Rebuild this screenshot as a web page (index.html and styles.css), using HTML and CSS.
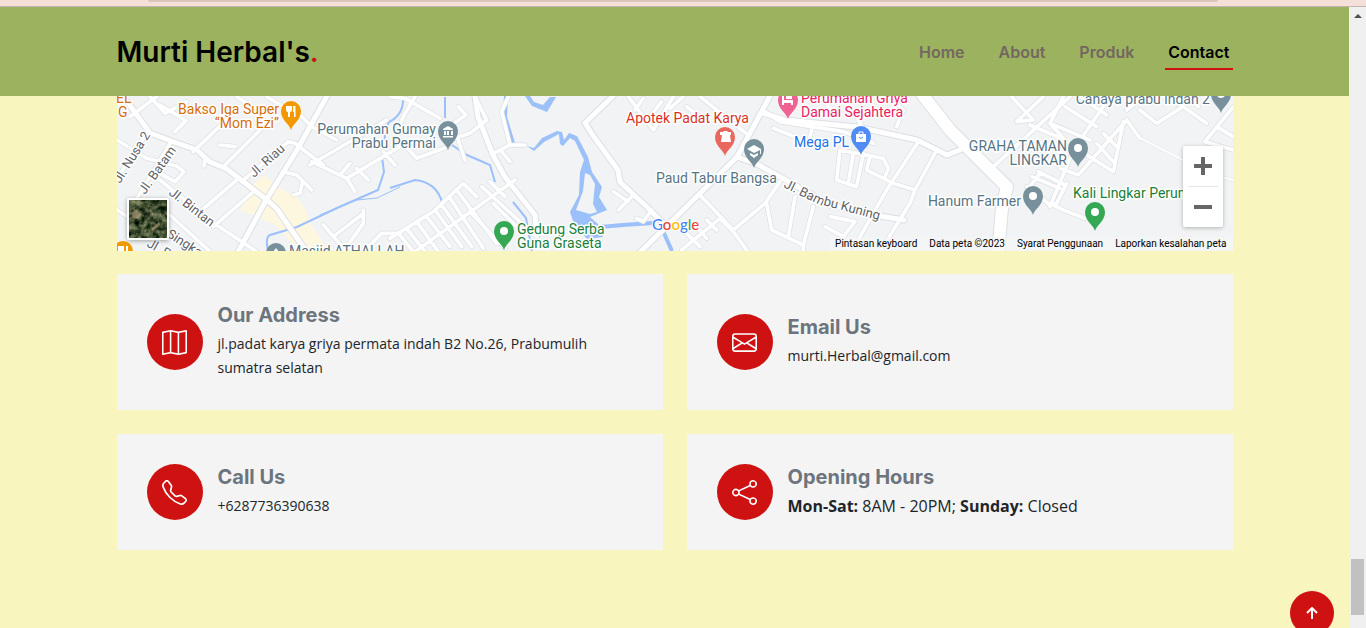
FILE: index.html
```html
<!DOCTYPE html>
<html lang="id">
<head>
<meta charset="utf-8">
<meta name="viewport" content="width=device-width, initial-scale=1">
<title>Murti Herbal's</title>
<link rel="stylesheet" href="styles.css">
</head>
<body>
<div class="browser-edge"><div class="address-edge"></div></div>
<div class="viewport">
  <div class="page">
    <header class="header">
      <div class="container header-row">
        <a class="logo" href="#">Murti Herbal's<span class="logo-dot">.</span></a>
        <nav class="nav">
          <a href="#">Home</a>
          <a href="#">About</a>
          <a href="#">Produk</a>
          <a href="#" class="active">Contact</a>
        </nav>
      </div>
    </header>
    <main class="container">
      <section class="map" aria-label="Map">
        <svg class="map-canvas" viewBox="117 96 1116 155" preserveAspectRatio="xMidYMid slice">
          <defs>
            <path id="pin" d="M0 0C-1.5-6-10-10-10-19A10 10 0 0 1 10-19C10-10 1.500-6 0 0Z"/>
            <filter id="terrain" x="0" y="0" width="1" height="1" color-interpolation-filters="sRGB">
              <feTurbulence type="fractalNoise" baseFrequency=".16" numOctaves="4" seed="8"/>
              <feColorMatrix values=".9 .3 0 0 -.34  .8 .3 0 0 -.24  .7 .2 0 0 -.25  0 0 0 0 1"/>
            </filter>
            <g id="minor">
              <g transform="translate(110 90) scale(.33333)">
                <path d="M60 80L140 20M120 20L165 70L230 35M150 45L228 92L195 125M22 150L110 205M110 130L22 265M180 160L75 335M110 205L200 228L222 245L195 275L150 250M130 255L320 405L440 485M22 360L60 385L180 375L300 485M395 275L535 155L555 160L600 195L640 225M270 365L380 270M310 410L425 310M250 185L380 60M345 225L495 75M285 205L282 228M330 165L375 170M555 60L605 110L680 150M600 225L830 90M605 215L710 265L735 305M710 265L870 170M740 235L775 270M690 255L720 220M820 185L855 225M520 245L560 255L605 300M578 275L570 310L550 315M640 405L710 485M670 440L760 370M700 485L760 400V360M760 485L815 430H870M380 20L480 85M470 20L570 80"/>
              </g>
              <g transform="translate(390 90) scale(.33333)">
                <path d="M255 20L290 90L240 130L195 145M355 20L335 65L360 165L310 190M360 165H405M335 185L360 215M75 20L40 80L20 130M0 20L45 25L150 85M205 50L228 75L185 105M175 170L80 205L35 155M205 150L225 210M0 445L130 365L220 280L260 320M75 485L375 270M25 430L70 485M50 415L105 485M80 395L145 485M110 380L180 470M135 360L215 470M155 345L245 470M180 325L280 475M200 300L320 460M240 365L345 475M275 290L440 440M300 275L345 320M310 340L400 430M670 305L715 335M730 315L685 360M715 20L790 120L850 20M735 60L760 25M780 80L815 35M740 385L760 395L785 360"/>
              </g>
              <g transform="translate(670 90) scale(.33333)">
                <path d="M0 55L40 20M90 20L235 135M50 50L90 80M310 115L400 150L470 170M285 65L330 95L520 125L610 160M430 100L420 140M510 180L500 270L560 290L580 190M510 180L640 205L655 235L645 260M550 190L535 280M600 200L590 240L670 280L735 300M560 80L575 110M745 155L650 300L570 440L555 485M800 180L735 300L720 340L630 485M90 315L190 420L285 340L330 275M290 340L305 420L400 465L430 350M375 320L355 440M400 465V485M35 480L150 385L190 425L230 480M50 430L90 470M80 410L110 445M110 390L140 420M480 380L555 395L520 440L465 410M680 110L700 60L660 20M450 20L500 75"/>
              </g>
              <g transform="translate(950 90) scale(.33333)">
                <path d="M130 230L360 20M185 20L250 90L200 95L280 20M240 105L345 150L300 100L420 150M345 50L440 110M340 20L300 100M390 20L470 75M480 20L370 180L300 350M330 235L385 255L530 90L570 145M520 95L490 245L410 195M440 160L490 215M460 130L500 170M245 260L330 295M265 245L345 285M230 290L300 345L320 340L350 280M270 250L235 295M300 340L340 360L405 385M570 60L620 100L700 50L770 100M640 20L700 50M710 20L745 50M850 50L765 155L850 180M800 110L850 140M530 60L580 20"/>
              </g>
            </g>
            <g id="major">
              <path d="M123 96L142 122L150 133L174 142L197 150L210 162L227 169L267 200L277 209L308 254M327 96L297 150L265 202L237 254M475 96L478 117L493 155L505 177L535 215L537 235M613 96L585 123L594 137L618 170L620 182L647 207L664 224M770 96L750 133L737 157L620 272M737 157L757 164L784 179L830 205L874 215L904 220M763 113L785 120L857 127L917 140L947 155L960 150"/>
            </g>
            <path id="highway" d="M922 94L950 130L977 157L1007 187L1002 208L998 255"/>
            <g id="lane"><path d="M1140 138L1183 160M1183 167L1233 180"/></g>
          </defs>
          <rect class="land" x="0" y="0" width="1366" height="400"/>
          <path class="district" d="M253 184L265 175L277 187L297 197L306 210L310 223L329 251H300L274 224L240 210Z"/>
          <g class="water">
            <path d="M525 96L532 106L547 112L556 97H550L543 105L534 102L530 96Z"/>
            <path d="M527 146L534 148L542 138L557 131L562 132L564 140L569 133L577 136L588 157L592 172L602 187L599 197L607 210L590 217L598 224L603 237L587 239L574 224L570 212L579 195L580 172L584 160L575 141L570 138L563 146L560 144L559 134L544 142L534 151ZM585 173L583 191L576 210L590 214L597 212L593 204L595 184L590 175Z" fill-rule="evenodd"/>
            <path class="stream wide" d="M506 96L505 117L513 143M600 227L623 225L653 223M663 231L672 251"/>
            <path class="stream" d="M403 97C404 112 395 119 389 122C384 130 386 137 384 140M382 157L384 172L378 190L337 208L297 227L270 235Q265 237 268 251M445 97V118M452 145L467 155L490 165L495 182M390 188L415 180Q436 182 442 202M513 202L526 218L532 251"/>
            <path class="stream thin" d="M400 187L377 198L357 200L320 215"/>
          </g>
          <use href="#minor" class="edge minor-edge"/><use href="#major" class="edge major-edge"/><use href="#highway" class="edge highway-edge"/><use href="#lane" class="edge lane-edge"/>
          <use href="#minor" class="road minor-road"/><use href="#major" class="road major-road"/><use href="#highway" class="road highway-road"/><use href="#lane" class="road lane-road"/>
          <g class="street">
            <text transform="translate(120 184) rotate(-58)">Jl. Nusa 2</text>
            <text transform="translate(145 195) rotate(-55)">Jl. Batam</text>
            <text transform="translate(254 178) rotate(-42)">Jl. Riau</text>
            <text transform="translate(168 194) rotate(38)">Jl. Bintan</text>
            <text transform="translate(146 246) rotate(30)">Jl. P</text>
            <text transform="translate(166 236) rotate(33)">Singkarak</text>
            <text transform="translate(783 187) rotate(26)">Jl. Bam</text>
            <text transform="translate(823 205) rotate(15)">bu Kuning</text>
          </g>
          <g class="place">
            <g class="food"><text x="116" y="103">EL</text><text x="118" y="117">G</text><text x="279" y="114" text-anchor="end">Bakso Iga Super</text><text x="279" y="128" text-anchor="end">“Mom Ezi”</text></g>
            <g class="civic"><text x="436" y="134" text-anchor="end">Perumahan Gumay</text><text x="436" y="148" text-anchor="end">Prabu Permai</text><text x="289" y="256">Masjid ATHALLAH</text><text x="656" y="183">Paud Tabur Bangsa</text><text x="1067" y="151" text-anchor="end">GRAHA TAMAN</text><text x="1067" y="165" text-anchor="end">LINGKAR</text><text x="1021" y="206" text-anchor="end">Hanum Farmer</text><text x="1210" y="104" text-anchor="end">Cahaya prabu indah 2</text></g>
            <g class="park"><text x="517" y="234">Gedung Serba</text><text x="517" y="248">Guna Graseta</text><text x="1073" y="198">Kali Lingkar Perumnas</text></g>
            <text class="health" x="626" y="123">Apotek Padat Karya</text>
            <g class="lodging"><text x="801" y="103">Perumahan Griya</text><text x="801" y="117">Damai Sejahtera</text></g>
            <text class="shop" x="849" y="147" text-anchor="end">Mega PL</text>
          </g>
          <g class="pin-orange"><use href="#pin" x="291" y="130"/><use href="#pin" x="123" y="270"/></g>
          <g class="pin-grey"><use href="#pin" x="448" y="150"/><use href="#pin" x="754" y="168"/><use href="#pin" x="1078" y="167"/><use href="#pin" x="1033" y="215"/><use href="#pin" x="1221" y="113"/><use href="#pin" x="276" y="272"/></g>
          <g class="pin-green"><use href="#pin" x="504" y="250"/><use href="#pin" x="1095" y="231"/></g>
          <use href="#pin" x="725" y="156" class="pin-red"/><use href="#pin" x="788" y="119" class="pin-pink"/><use href="#pin" x="861" y="155" class="pin-blue"/>
          <g fill="#fff">
            <circle cx="1078" cy="148" r="4"/><circle cx="1033" cy="196" r="4"/><circle cx="1221" cy="94" r="4"/><circle cx="504" cy="231" r="4"/><circle cx="1095" cy="212" r="4"/>
            <path d="M286 106h6v4q0 2-2 2v5h-2v-5q-2 0-2-2ZM293 106h2.500v11H294v-5h-1ZM118 246h6v4q0 2-2 2h-4ZM126 246h2v6h-2Z"/>
            <path d="M448 126l5 3v1h-10v-1ZM444 131h2v4h-2ZM447 131h2v4h-2ZM451 131h2v4h-2ZM443 136h10v1.500h-10Z"/>
            <path d="M720 132h3l1-1h3l1 1h3v3h-1l1 7h-10l1-7h-2Z"/>
            <path d="M747 149l7-4 7 4v5h-1v-4l-6 3ZM750 153l4 2 4-2v2l-4 3-4-3Z"/>
            <path d="M276 248l3 4h-6Z"/>
            <path d="M782 96h2v4h9v5h-2v-2h-7v2h-2ZM786 96h6v3h-6Z"/>
            <path d="M856 134h10v8h-10Z"/><path d="M859 134v-2h4v2" fill="none" stroke="#fff"/>
          </g>
          <path d="M859 137q2 3 4 0" fill="none" stroke="#4f8df5"/>
          <text class="google" x="652" y="230"><tspan fill="#4285f4">G</tspan><tspan fill="#ea4335">o</tspan><tspan fill="#fbbc05">o</tspan><tspan fill="#4285f4">g</tspan><tspan fill="#34a853">l</tspan><tspan fill="#ea4335">e</tspan></text>
        </svg>
        <button class="satellite" aria-label="Citra satelit"><svg viewBox="0 0 38 38"><rect width="38" height="38" filter="url(#terrain)"/><path d="M3 13l4-4 5 5-3 5-5-1ZM22 29l8-7 1 3-7 6Z" fill="#ad9978" opacity=".65"/></svg></button>
        <div class="zoom">
          <button aria-label="Perbesar"><svg viewBox="0 0 18 18"><path d="M7 0h4v7h7v4h-7v7H7v-7H0V7h7Z"/></svg></button>
          <button aria-label="Perkecil"><svg viewBox="0 0 18 18"><path d="M0 7h18v4H0Z"/></svg></button>
        </div>
        <div class="map-links"><button>Pintasan keyboard</button><span>Data peta ©2023</span><a href="#">Syarat Penggunaan</a><a href="#">Laporkan kesalahan peta</a></div>
      </section>
      <section class="cards">
        <article class="card">
          <span class="icon"><svg viewBox="0 0 16 16"><path fill-rule="evenodd" d="M15.817.113A.5.5 0 0 1 16 .5v14a.5.5 0 0 1-.402.49l-5 1a.502.502 0 0 1-.196 0L5.500 15.010l-4.902.98A.5.5 0 0 1 0 15.500v-14a.5.5 0 0 1 .402-.49l5-1a.5.5 0 0 1 .196 0L10.500.99l4.902-.98a.5.5 0 0 1 .415.103zM10 1.910l-4-.8v12.980l4 .8V1.910zm1 12.980 4-.8V1.110l-4 .8v12.980zm-6-.8V1.110l-4 .8v12.980l4-.8z"/></svg></span>
          <div><h3>Our Address</h3><p>jl.padat karya griya permata indah B2 No.26, Prabumulih sumatra selatan</p></div>
        </article>
        <article class="card">
          <span class="icon"><svg viewBox="0 0 16 16"><path d="M0 4a2 2 0 0 1 2-2h12a2 2 0 0 1 2 2v8a2 2 0 0 1-2 2H2a2 2 0 0 1-2-2V4Zm2-1a1 1 0 0 0-1 1v.217l7 4.200 7-4.200V4a1 1 0 0 0-1-1H2Zm13 2.383-4.708 2.825L15 11.105V5.383Zm-.034 6.876-5.640-3.471L8 9.583l-1.326-.795-5.640 3.470A1 1 0 0 0 2 13h12a1 1 0 0 0 .966-.741ZM1 11.105l4.708-2.897L1 5.383v5.722Z"/></svg></span>
          <div><h3>Email Us</h3><p>murti.Herbal@gmail.com</p></div>
        </article>
        <article class="card">
          <span class="icon"><svg viewBox="0 0 16 16"><path d="M3.654 1.328a.678.678 0 0 0-1.015-.063L1.605 2.300c-.483.484-.661 1.169-.450 1.770a17.568 17.568 0 0 0 4.168 6.608 17.569 17.569 0 0 0 6.608 4.168c.601.211 1.286.033 1.770-.450l1.034-1.034a.678.678 0 0 0-.063-1.015l-2.307-1.794a.678.678 0 0 0-.580-.122l-2.190.547a1.745 1.745 0 0 1-1.657-.459L5.482 8.062a1.745 1.745 0 0 1-.460-1.657l.548-2.190a.678.678 0 0 0-.122-.580L3.654 1.328zM1.884.511a1.745 1.745 0 0 1 2.612.163L6.290 2.980c.329.423.445.974.315 1.494l-.547 2.190a.678.678 0 0 0 .178.643l2.457 2.457a.678.678 0 0 0 .644.178l2.189-.547a1.745 1.745 0 0 1 1.494.315l2.306 1.794c.829.645.905 1.870.163 2.611l-1.034 1.034c-.740.740-1.846 1.065-2.877.702a18.634 18.634 0 0 1-7.010-4.420 18.634 18.634 0 0 1-4.420-7.009c-.362-1.030-.037-2.137.703-2.877L1.885.511z"/></svg></span>
          <div><h3>Call Us</h3><p>+6287736390638</p></div>
        </article>
        <article class="card">
          <span class="icon"><svg viewBox="0 0 16 16"><path d="M13.500 1a1.500 1.500 0 1 0 0 3 1.500 1.500 0 0 0 0-3zM11 2.500a2.500 2.500 0 1 1 .603 1.628l-6.718 3.120a2.499 2.499 0 0 1 0 1.504l6.718 3.120a2.500 2.500 0 1 1-.488.876l-6.718-3.120a2.500 2.500 0 1 1 0-3.256l6.718-3.120A2.500 2.500 0 0 1 11 2.500zm-8.500 4a1.500 1.500 0 1 0 0 3 1.500 1.500 0 0 0 0-3zm11 5.500a1.500 1.500 0 1 0 0 3 1.500 1.500 0 0 0 0-3z"/></svg></span>
          <div><h3>Opening Hours</h3><p class="hours"><strong>Mon-Sat:</strong> 8AM - 20PM; <strong>Sunday:</strong> Closed</p></div>
        </article>
      </section>
    </main>
    <a class="to-top" href="#" aria-label="Back to top"><svg viewBox="0 0 12 12"><path d="M6 12V1M1 6l5-5 5 5"/></svg></a>
  </div>
  <div class="scrollbar"><svg class="scroll-arrow" viewBox="0 0 8 4"><path d="M4 0l4 4H0Z"/></svg><div class="thumb"></div></div>
</div>
</body>
</html>
```
FILE: styles.css
```css
* { box-sizing: border-box; }
body { margin: 0; height: 100vh; overflow: hidden; display: flex; flex-direction: column; font: 16px/24px "Open Sans", sans-serif; color: #212529; background: #f9f5bf; }
h3, p { margin: 0; }
a { color: inherit; text-decoration: none; }
button { border: 0; padding: 0; font: inherit; color: inherit; background: none; cursor: pointer; }
svg { display: block; }

.browser-edge { height: 7px; flex: none; background: #f5e0d9; border-bottom: 1px solid #c4b3ae; }
.address-edge { height: 2px; margin: 0 148px; background: #d9c6bf; border-radius: 0 0 4px 4px; }
.viewport { flex: 1; min-height: 0; display: flex; }
.page { flex: 1; min-width: 0; position: relative; overflow: hidden; }
.container { width: 100%; max-width: 1140px; margin: 0 auto; padding: 0 12px; }

.header { background: #9bb35f; }
.header-row { min-height: 89px; display: flex; align-items: center; justify-content: space-between; font-family: Inter, sans-serif; font-weight: 600; }
.logo { font-size: 28px; line-height: 34px; color: #000; }
.logo-dot { color: #ce1212; }
.nav { display: flex; gap: 28px; color: #746761; }
.nav a { padding: 6px 3px 4px; border-bottom: 2px solid transparent; }
.nav .active { color: #000; border-color: #ce1212; }

.map { position: relative; overflow: hidden; margin-bottom: 23px; }
.map-canvas { width: 100%; height: 155px; }
.land { fill: #f1f3f4; }
.district { fill: #fef7e0; }
.water { fill: #9cc0fa; }
.stream { fill: none; stroke: #9cc0fa; stroke-width: 2; }
.stream.wide { stroke-width: 4; }
.stream.thin { stroke-width: 1; }
.edge, .road { fill: none; stroke-linejoin: round; stroke-linecap: round; }
.edge { stroke: #dcdfe4; }
.road { stroke: #fff; }
.minor-edge { stroke-width: 15; }
.minor-road { stroke-width: 11; }
.major-edge { stroke-width: 7; }
.major-road { stroke-width: 5; }
.highway-edge { stroke-width: 14; }
.highway-road { stroke-width: 12; }
.lane-edge { stroke-width: 3; }
.lane-road { stroke-width: 2; }
.place, .street { font-family: Roboto, sans-serif; font-size: 14px; stroke: #fff; stroke-width: 3px; stroke-linejoin: round; paint-order: stroke; }
.street { font-size: 13px; fill: #5f6368; }
.food { fill: #d56e0c; }
.civic { fill: #587483; }
.park { fill: #188038; }
.health { fill: #d93025; }
.lodging { fill: #e91e63; }
.shop { fill: #1a73e8; }
.pin-orange { fill: #f29900; }
.pin-grey { fill: #78909c; }
.pin-green { fill: #34a853; }
.pin-red { fill: #ea675d; }
.pin-pink { fill: #f06292; }
.pin-blue { fill: #4f8df5; }
.google { font: 500 15px Lato, sans-serif; stroke: #fff; stroke-width: 2px; paint-order: stroke; }

.satellite { position: absolute; left: 10px; bottom: 11px; width: 42px; height: 42px; border: 2px solid #fff; border-radius: 2px; overflow: hidden; box-shadow: 0 1px 4px #0005; }
.zoom { position: absolute; right: 10px; bottom: 24px; width: 40px; padding: 0 5px; background: #fff; border-radius: 2px; box-shadow: 0 1px 4px #0004; }
.zoom button { width: 100%; height: 40px; display: grid; place-items: center; }
.zoom button + button { height: 41px; border-top: 1px solid #e6e6e6; }
.zoom svg { width: 18px; fill: #666; }
.map-links { position: absolute; right: 0; bottom: 0; display: flex; font: 10px/14px Roboto, sans-serif; color: #000; background: #f5f5f5b3; }
.map-links > * { padding: 0 6px; }

.cards { display: grid; grid-template-columns: 1fr 1fr; gap: 24px; }
.card { display: flex; align-items: center; gap: 15px; padding: 30px; background: #f4f4f4; }
.icon { flex: none; width: 56px; height: 56px; border-radius: 50%; display: grid; place-items: center; background: #ce1212; }
.icon svg { width: 25px; height: 25px; fill: #fff; }
.card h3 { font: 700 20px/22px Inter, sans-serif; color: #6c757d; margin-bottom: 6px; }
.card p { font-size: 14px; }
.card .hours { font-size: 16px; }

.to-top { position: absolute; right: 15px; bottom: -7px; width: 44px; height: 44px; border-radius: 50%; display: grid; place-items: center; background: #ce1212; }
.to-top svg { width: 12px; height: 12px; fill: none; stroke: #fff; stroke-width: 2; }
.scrollbar { flex: none; width: 17px; padding: 7px 2px 13px; display: flex; flex-direction: column; align-items: center; justify-content: space-between; background: #f0f0f0; }
.scroll-arrow { width: 8px; height: 4px; fill: #505050; }
.thumb { width: 13px; height: 56px; background: #c1c1c1; }
```
